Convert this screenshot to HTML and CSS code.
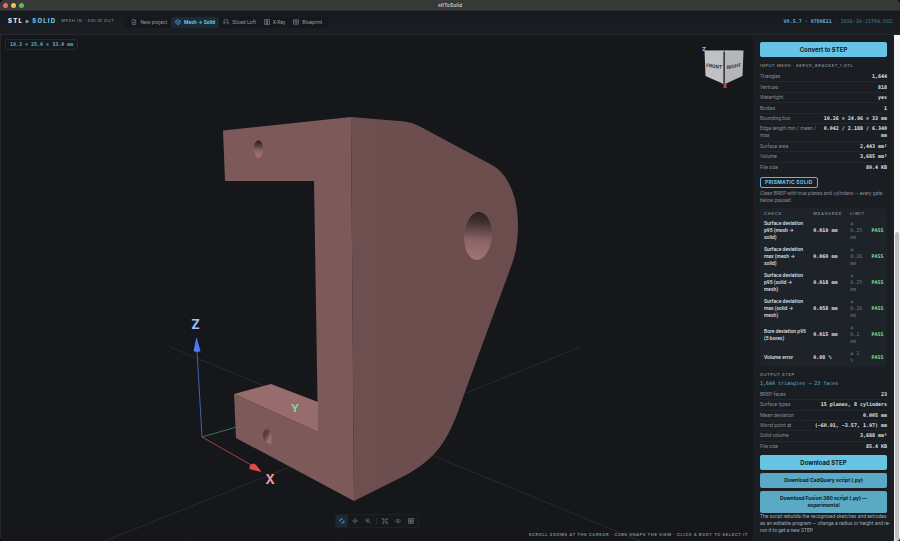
FILE: index.html
```html
<!DOCTYPE html>
<html lang="en">
<head>
<meta charset="utf-8">
<title>stlToSolid</title>
<link rel="stylesheet" href="styles.css">
</head>
<body>
<div class="window">
  <div class="titlebar">
    <div class="lights"><span class="light red"></span><span class="light yellow"></span><span class="light green"></span></div>
    <div class="title">stlToSolid</div>
  </div>
  <header class="header">
    <div class="brand">STL <span>▸ SOLID</span></div>
    <div class="tagline">MESH IN · SOLID OUT</div>
    <nav class="tabs">
      <button class="tab"><svg viewBox="0 0 24 24"><path d="M14 2H5v20h14V7zM14 2v5h5M12 11v7M8.500 14.500h7"/></svg>New project</button>
      <button class="tab active"><svg viewBox="0 0 24 24"><path d="M12 2l9 5v10l-9 5-9-5V7zM3 7l9 5 9-5M12 12v10"/></svg>Mesh → Solid</button>
      <button class="tab"><svg viewBox="0 0 24 24"><path d="M4 19V3h16v16M1 19h7M16 19h7M4 13h16"/></svg>Sliced Loft</button>
      <button class="tab"><svg viewBox="0 0 24 24"><path d="M2 2h20v20H2zM7 6h10M7 10h10M7 14h10M7 18h10M12 6v12"/></svg>X-Ray</button>
      <button class="tab"><svg viewBox="0 0 24 24"><path d="M2 3h20v18H2zM7 7h10v6H7zM7 17h4M15 13v8M2 8h5"/></svg>Blueprint</button>
    </nav>
    <div class="version"><b>V0.5.7 · 07D0E11</b> · 2026-10-21T04:58Z</div>
  </header>
  <div class="workspace">
    <main class="viewer">
      <svg class="scene" viewBox="0 35 753 506" preserveAspectRatio="xMidYMid slice" role="img" aria-label="Servo bracket model">
        <defs>
          <linearGradient id="bore" x1="0" y1="0" x2="0" y2="1"><stop offset="0" stop-color="#2b2020"/><stop offset=".2" stop-color="#3f3030"/><stop offset=".6" stop-color="#8a6565"/><stop offset="1" stop-color="#a37474"/></linearGradient>
          <linearGradient id="side" x1="0" y1="0" x2="1" y2="0"><stop offset="0" stop-color="#6d4f50"/><stop offset="1" stop-color="#6b4d4e"/></linearGradient>
          <linearGradient id="pocket" x1="0" y1="0" x2="1" y2="1"><stop offset="0" stop-color="#4b3637"/><stop offset=".4" stop-color="#5c4343"/><stop offset=".7" stop-color="#977070"/></linearGradient>
        </defs>
        <g class="grid">
          <path d="M0 385L260 318M0 400L340 320M0 420L400 322M0 446L470 324M0 480L560 326M0 525L640 335M180 541L710 350M330 541L753 372M500 541L753 420"/>
          <path d="M753 385L493 318M753 400L413 320M753 420L353 322M753 446L283 324M753 480L193 326M753 525L113 335M573 541L43 350M423 541L0 372M253 541L0 420"/>
        </g>
        <path class="grid-main" d="M170 347L640 541M580 347L466 393M105 541L290 467"/>
        <path d="M202 437L240 426" stroke="#3f7050"/>
        <path d="M223 130.500L351 117L354 501L236 438L234 394L318 432L314 181H225Z" fill="#7d5959"/>
        <path d="M234 394L271 384L318 402V432Z" fill="#986c6d"/>
        <path d="M351 117L405 121.500Q413 122.500 420 126.500L490 164C509 173 518 199 518 225Q518 247 512 264L470 378L456 417Q446 442 434 454Q425 464 408 474L354 501Z" fill="url(#side)"/>
        <ellipse cx="258.500" cy="149" rx="4.700" ry="8.800" fill="url(#bore)"/>
        <ellipse cx="478" cy="236" rx="13.800" ry="24" transform="rotate(4 478 236)" fill="url(#bore)"/>
        <path d="M267 429Q271.500 430 271.500 436V444C266 444 263 440 263 435Q263 430 267 429Z" fill="url(#pocket)"/>
        <path d="M202 437L197 350" stroke="#3d63a8"/>
        <path d="M202 437L253 466" stroke="#a34143"/>
        <path d="M196.500 337L193.500 351Q197 353 200.500 351Z" fill="#4a7bf5"/>
        <path d="M261.500 472L249.500 469Q249 465 253 463.500Q256 464 257 466Z" fill="#e04c49"/>
        <text class="axis z" x="195.500" y="329">Z</text>
        <text class="axis x" x="270" y="484">X</text>
        <text class="axis y" x="295" y="412">Y</text>
        <g>
          <path d="M704.500 50.500L723.500 51.500V84L705.500 76Z" fill="#bfc1c4"/>
          <path d="M725 51.500L743.500 50.500L742.500 76L725 84Z" fill="#b4b6b9"/>
          <path d="M704.500 50.500H743.500L724.500 52Z" fill="#d8dadc"/>
          <path d="M724.300 51V84" stroke="#44474b"/>
          <text class="cube" x="714" y="68" transform="rotate(7 714 67)">FRONT</text>
          <text class="cube" x="734" y="68" transform="rotate(-9 734 67)">RIGHT</text>
          <text class="tiny z" x="704" y="51">Z</text>
          <text class="tiny x" x="725" y="88">X</text>
        </g>
      </svg>
      <div class="size">19.3 × 25.0 × 33.0 mm</div>
      <div class="tools">
        <button class="tool active" aria-label="Orbit"><svg viewBox="0 0 24 24"><path d="M4 13V8a4 4 0 0 1 4-4h5M10 1l4 3-4 4M20 11v5a4 4 0 0 1-4 4h-5M14 23l-4-3 4-4M2 10l2 3 4-3M16 14l4-3 2 3"/></svg></button>
        <button class="tool" aria-label="Pan"><svg viewBox="0 0 24 24"><path d="M12 2v20M2 12h20M9 5l3-3 3 3M9 19l3 3 3-3M5 9l-3 3 3 3M19 9l3 3-3 3"/></svg></button>
        <button class="tool" aria-label="Zoom"><svg viewBox="0 0 24 24"><circle cx="10" cy="10" r="7"/><path d="M15 15l7 7M10 7v6M7 10h6"/></svg></button>
        <span class="divider"></span>
        <button class="tool" aria-label="Fit"><svg viewBox="0 0 24 24"><path d="M2 7V2h5M17 2h5v5M22 17v5h-5M7 22H2v-5M7 7h10v10H7zM2 2l5 5M22 2l-5 5M2 22l5-5M22 22l-5-5"/></svg></button>
        <button class="tool" aria-label="Visibility"><svg viewBox="0 0 24 24"><path d="M1 12q11-14 22 0q-11 14-22 0z"/><circle cx="12" cy="12" r="3"/></svg></button>
        <button class="tool" aria-label="Grid"><svg viewBox="0 0 24 24"><path d="M2 2h20v20H2zM2 9h20M2 15h20M9 2v20M15 2v20"/></svg></button>
      </div>
      <div class="hint">SCROLL ZOOMS AT THE CURSOR · CUBE SNAPS THE VIEW · CLICK A BODY TO SELECT IT</div>
    </main>
    <aside class="panel">
      <button class="primary">Convert to STEP</button>
      <h2>INPUT MESH · SERVO_BRACKET_1.STL</h2>
      <dl class="stats mesh">
        <div><dt>Triangles</dt><dd>1,644</dd></div>
        <div><dt>Vertices</dt><dd>818</dd></div>
        <div><dt>Watertight</dt><dd>yes</dd></div>
        <div><dt>Bodies</dt><dd>1</dd></div>
        <div><dt>Bounding box</dt><dd>19.26 × 24.96 × 33 mm</dd></div>
        <div class="wrap"><dt>Edge length min / mean / max</dt><dd>0.042 / 2.188 / 6.340 mm</dd></div>
        <div><dt>Surface area</dt><dd>2,443 mm²</dd></div>
        <div><dt>Volume</dt><dd>3,685 mm³</dd></div>
        <div><dt>File size</dt><dd>80.4 KB</dd></div>
      </dl>
      <div class="badge">PRISMATIC SOLID</div>
      <p class="note">Clean BREP with true planes and cylinders — every gate below passed.</p>
      <table class="checks">
        <thead><tr><th class="check">CHECK</th><th class="measured">MEASURED</th><th class="limit">LIMIT</th><th></th></tr></thead>
        <tbody>
          <tr><td>Surface deviation p95 (mesh → solid)</td><td>0.019 mm</td><td>≤ 0.25 mm</td><td>PASS</td></tr>
          <tr><td>Surface deviation max (mesh → solid)</td><td>0.060 mm</td><td>≤ 0.26 mm</td><td>PASS</td></tr>
          <tr><td>Surface deviation p95 (solid → mesh)</td><td>0.018 mm</td><td>≤ 0.25 mm</td><td>PASS</td></tr>
          <tr><td>Surface deviation max (solid → mesh)</td><td>0.058 mm</td><td>≤ 0.26 mm</td><td>PASS</td></tr>
          <tr><td>Bore deviation p95 (5 bores)</td><td>0.015 mm</td><td>≤<br>0.1<br>mm</td><td>PASS</td></tr>
          <tr><td>Volume error</td><td>0.08 %</td><td>≤ 2<br>%</td><td>PASS</td></tr>
        </tbody>
      </table>
      <h2>OUTPUT STEP</h2>
      <p class="faces">1,644 triangles → 23 faces</p>
      <dl class="stats step">
        <div><dt>BREP faces</dt><dd>23</dd></div>
        <div><dt>Surface types</dt><dd>15 planes, 8 cylinders</dd></div>
        <div><dt>Mean deviation</dt><dd>0.005 mm</dd></div>
        <div><dt>Worst point at</dt><dd>(−60.91, −3.57, 1.97) mm</dd></div>
        <div><dt>Solid volume</dt><dd>3,688 mm³</dd></div>
        <div><dt>File size</dt><dd>85.4 KB</dd></div>
      </dl>
      <div class="downloads">
        <button class="primary">Download STEP</button>
        <button class="primary muted">Download CadQuery script (.py)</button>
        <button class="primary muted">Download Fusion 360 script (.py) —<br>experimental</button>
      </div>
      <p class="note script">The script rebuilds the recognised sketches and extrudes as an editable program — change a radius or height and re-run it to get a new STEP.</p>
    </aside>
    <div class="scrollbar"><div class="thumb"></div></div>
  </div>
</div>
</body>
</html>
```
FILE: styles.css
```css
* { box-sizing: border-box; margin: 0; padding: 0; }
html { background: #050606; }
body { height: 100vh; font: 5px/7px Roboto, Inter, sans-serif; color: #dfe3e8; }
button { font: inherit; color: inherit; border: 0; background: none; }
svg { display: block; fill: none; stroke: currentColor; stroke-width: 2; }
.window { height: 100%; display: flex; flex-direction: column; overflow: hidden; border-radius: 4px; background: #15171a; }

.titlebar { flex: none; display: grid; grid-template-columns: 1fr auto 1fr; align-items: center; height: 11px; padding: 0 3px; background: #373838; border-bottom: 1px solid #292b2d; }
.lights { display: flex; gap: 3px; }
.light { width: 5px; height: 5px; border-radius: 50%; }
.red { background: #ec6a5e; }
.yellow { background: #f4bf4f; }
.green { background: #58c146; }
.title { font-family: Inter, sans-serif; font-weight: 700; color: #b9babb; }

.header { flex: none; display: flex; align-items: center; height: 24px; padding: 0 8px 5px; background: linear-gradient(#16191d, #1b1f24); border-bottom: 1px solid #24282e; }
.brand { font: 800 6px/7px Inter, sans-serif; letter-spacing: 0.2em; color: #eef1f4; white-space: nowrap; }
.brand span { color: #6cc5e6; }
.tagline { margin-left: 5px; font: 500 4px/7px Inter, sans-serif; letter-spacing: 0.15em; color: #7d848e; white-space: nowrap; }
.tabs { display: flex; margin: 4px 0 0 11px; padding: 0 2px; border-radius: 2px; background: #15181c; }
.tab { display: flex; align-items: center; gap: 3px; height: 11px; padding: 0 4px; border-radius: 2px; color: #9198a1; white-space: nowrap; }
.tab svg { width: 6px; height: 6px; }
.tab.active { background: #1a2a36; color: #6cc5e6; font-weight: 700; }
.version { margin: 2px 0 0 auto; font-family: "DejaVu Sans Mono", monospace; color: #417f97; white-space: nowrap; }
.version b { color: #5db0ce; }

.workspace { flex: 1; min-height: 0; display: flex; }
.viewer { position: relative; flex: 1; min-width: 0; overflow: hidden; box-shadow: inset 1px 0 #25282b; }
.scene { width: 100%; height: 100%; stroke: none; stroke-width: 1; }
.grid { stroke: #191b1e; }
.grid-main { stroke: #282b2e; }
.axis { font-family: Inter, sans-serif; font-size: 13px; font-weight: 700; text-anchor: middle; }
.axis.y { font-size: 11px; fill: #86d79b; }
.z { fill: #9fc2fa; }
.x { fill: #f39a99; }
.cube { font-size: 5px; font-weight: 700; text-anchor: middle; fill: #33363a; }
.tiny { font-size: 6px; font-weight: 700; text-anchor: middle; }
.tiny.x { fill: #dc6a70; }
.size { position: absolute; left: 5px; top: 4px; padding: 1px 4px; border: 1px solid #202930; border-radius: 2px; background: #15191d; font: 700 5px/7px "DejaVu Sans Mono", monospace; color: #5fafcd; }
.tools { position: absolute; bottom: 13px; left: 50%; transform: translateX(-50%); display: flex; align-items: center; gap: 1px; padding-right: 1px; border: 1px solid #1d2024; border-radius: 2px; background: #16191c; color: #858b92; }
.tool { padding: 3px; border-radius: 2px; }
.tool svg { width: 6px; height: 6px; }
.tool.active { background: #1a2a36; color: #6cc5e6; }
.divider { width: 1px; height: 6px; margin: 0 1px; background: #25292d; }
.hint { position: absolute; right: 5px; bottom: 3px; font: 600 4px/7px Inter, sans-serif; letter-spacing: 0.15em; color: #898f97; white-space: nowrap; }

.panel { flex: none; width: 141px; padding: 7px 7px 0 6px; overflow: hidden; border-left: 1px solid #1b1e22; background: #1a1e23; }
.primary { display: block; width: 100%; padding: 4px 6px; border-radius: 2px; background: #68c4e4; color: #0f1b22; font: 700 6px/7px Inter, sans-serif; }
.primary.muted { background: #5aa9c5; font-size: 5px; line-height: 7px; }
h2 { margin-top: 5px; font: 600 4px/7px Inter, sans-serif; letter-spacing: 0.15em; color: #7f8690; white-space: nowrap; }
.stats { display: grid; }
.stats.mesh { min-height: 101px; margin-top: 3px; }
.stats.step { min-height: 62px; margin-top: 3px; }
.stats div { display: flex; justify-content: space-between; align-items: center; gap: 4px; border-bottom: 1px solid #23272d; }
.stats div:last-child { border-bottom-color: transparent; }
dt { color: #858c96; }
dd { text-align: right; font-family: "DejaVu Sans Mono", monospace; font-weight: 700; color: #dde1e6; }
.stats div:not(.wrap) dd { white-space: nowrap; }
.stats .wrap { gap: 0; }
.wrap dt { flex: 1; }
.wrap dd { flex: none; width: 65px; }
.badge { width: max-content; margin-top: 4px; padding: 1px 4px; border: 1px solid #5fb7d6; border-radius: 2px; font-family: Inter, sans-serif; font-weight: 700; letter-spacing: 0.05em; color: #6cc5e6; }
.note { margin-top: 2px; color: #858c96; }
.checks { width: 100%; margin-top: 4px; table-layout: fixed; border-collapse: collapse; border-radius: 2px; background: #1e2229; }
.checks th { padding: 2px 0 1px; text-align: left; font: 600 4px/7px Inter, sans-serif; letter-spacing: 0.2em; color: #7f8690; }
.checks .check { width: 42%; padding-left: 4px; }
.checks .measured { width: 29%; }
.checks .limit { width: 16%; }
.checks td { padding: 2px 0 3px; vertical-align: middle; font-family: "DejaVu Sans Mono", monospace; }
.checks td:nth-child(1) { padding-left: 4px; padding-right: 7px; font-family: inherit; font-weight: 500; }
.checks td:nth-child(2) { font-weight: 700; }
.checks td:nth-child(3) { padding-right: 4px; color: #747b85; }
.checks td:nth-child(4) { padding-left: 1px; font-weight: 700; color: #7fdf94; }
.checks + h2 { margin-top: 4px; }
.faces { margin-top: 2px; font-family: "DejaVu Sans Mono", monospace; color: #5fb7d6; white-space: nowrap; }
.downloads { display: grid; gap: 3px; margin-top: 3px; }
.note.script { margin: 0 -6px 0 0; padding-right: 2px; color: #a3a9b1; }
.scrollbar { flex: none; display: flex; align-items: flex-end; width: 6px; padding: 0 1px; background: #f7f7f7; }
.thumb { width: 100%; height: 61%; border-radius: 2px; background: #bfc0c0; }
```
